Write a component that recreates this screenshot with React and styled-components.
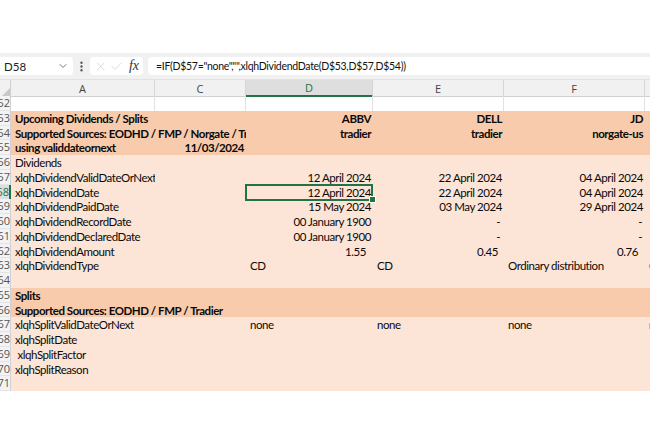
import React from "react";
import styled, { createGlobalStyle, css } from "styled-components";
import { ChevronDown, EllipsisVertical, X, Check } from "lucide-react";

const GREEN = "#217346";
const COLS = "11px 144px 91px 127px 131px 141px 60px";

const rows = [
  { n: 52, tone: "white", cells: [{}, {}, {}, {}, {}, {}] },
  {
    n: 53,
    tone: "dark",
    cells: [
      { t: "Upcoming Dividends / Splits", b: true, span: 2 },
      { t: "ABBV", b: true, r: true },
      { t: "DELL", b: true, r: true },
      { t: "JD", b: true, r: true },
      {},
    ],
  },
  {
    n: 54,
    tone: "dark",
    cells: [
      { t: "Supported Sources: EODHD / FMP / Norgate / Tradier", b: true, span: 2 },
      { t: "tradier", b: true, r: true },
      { t: "tradier", b: true, r: true },
      { t: "norgate-us", b: true, r: true },
      {},
    ],
  },
  {
    n: 55,
    tone: "dark",
    cells: [
      { t: "using validdateornext", b: true },
      { t: "11/03/2024", b: true, r: true },
      {},
      {},
      {},
      {},
    ],
  },
  { n: 56, tone: "light", cells: [{ t: "Dividends", span: 6 }] },
  {
    n: 57,
    tone: "light",
    cells: [
      { t: "xlqhDividendValidDateOrNext" },
      {},
      { t: "12 April 2024", r: true },
      { t: "22 April 2024", r: true },
      { t: "04 April 2024", r: true },
      {},
    ],
  },
  {
    n: 58,
    tone: "light",
    cells: [
      { t: "xlqhDividendDate" },
      {},
      { t: "12 April 2024", r: true, sel: true },
      { t: "22 April 2024", r: true },
      { t: "04 April 2024", r: true },
      {},
    ],
  },
  {
    n: 59,
    tone: "light",
    cells: [
      { t: "xlqhDividendPaidDate" },
      {},
      { t: "15 May 2024", r: true },
      { t: "03 May 2024", r: true },
      { t: "29 April 2024", r: true },
      {},
    ],
  },
  {
    n: 60,
    tone: "light",
    cells: [
      { t: "xlqhDividendRecordDate" },
      {},
      { t: "00 January 1900", r: true },
      { t: "-", r: true, pad: 4 },
      { t: "-", r: true, pad: 3 },
      {},
    ],
  },
  {
    n: 61,
    tone: "light",
    cells: [
      { t: "xlqhDividendDeclaredDate" },
      {},
      { t: "00 January 1900", r: true },
      { t: "-", r: true, pad: 4 },
      { t: "-", r: true, pad: 3 },
      {},
    ],
  },
  {
    n: 62,
    tone: "light",
    cells: [
      { t: "xlqhDividendAmount" },
      {},
      { t: "1.55", r: true, pad: 7 },
      { t: "0.45", r: true, pad: 6 },
      { t: "0.76", r: true, pad: 7 },
      {},
    ],
  },
  {
    n: 63,
    tone: "light",
    cells: [
      { t: "xlqhDividendType" },
      {},
      { t: "CD" },
      { t: "CD" },
      { t: "Ordinary distribution" },
      { t: "CD" },
    ],
  },
  { n: 64, tone: "light", cells: [{ span: 6 }] },
  { n: 65, tone: "dark", cells: [{ t: "Splits", b: true, span: 6 }] },
  {
    n: 66,
    tone: "dark",
    cells: [{ t: "Supported Sources: EODHD / FMP / Tradier", b: true, span: 6 }],
  },
  {
    n: 67,
    tone: "light",
    cells: [
      { t: "xlqhSplitValidDateOrNext" },
      {},
      { t: "none" },
      { t: "none" },
      { t: "none" },
      { t: "none" },
    ],
  },
  { n: 68, tone: "light", cells: [{ t: "xlqhSplitDate", span: 6 }] },
  { n: 69, tone: "light", cells: [{ t: "\u00a0xlqhSplitFactor", span: 6 }] },
  { n: 70, tone: "light", cells: [{ t: "xlqhSplitReason", span: 6 }] },
  { n: 71, tone: "light", cells: [{ span: 6 }] },
];

const headers = ["A", "C", "D", "E", "F", ""];

const App = () => (
  <>
    <GlobalStyle />
    <Page>
      <TopSpace />
      <FormulaBar>
        <NameBox>
          <span>D58</span>
          <ChevronDown size={12} strokeWidth={1.6} color="#555" />
        </NameBox>
        <Kebab>
          <EllipsisVertical size={13} strokeWidth={2.4} color="#555" />
        </Kebab>
        <FxBox>
          <X size={15} strokeWidth={1.1} color="#c4c4c4" />
          <Check size={15} strokeWidth={1.1} color="#c4c4c4" />
          <Fx>fx</Fx>
        </FxBox>
        <FormulaInput>
          =IF(D$57="none","",xlqhDividendDate(D$53,D$57,D$54))
        </FormulaInput>
      </FormulaBar>
      <HeaderRow>
        <Corner>
          <svg width="9" height="9" viewBox="0 0 9 9">
            <polygon points="9,1 9,9 1,9" fill="#c8c8c8" />
          </svg>
        </Corner>
        {headers.map((h, i) => (
          <ColHeader key={i} $active={h === "D"}>
            {h}
          </ColHeader>
        ))}
      </HeaderRow>
      {rows.map((row) => (
        <Row key={row.n} $tone={row.tone}>
          <RowNum $active={row.n === 58}>{row.n}</RowNum>
          {row.cells.map((c, i) => (
            <Cell
              key={i}
              $span={c.span || 1}
              $right={c.r}
              $bold={c.b}
              $pad={c.pad}
              $grid={row.tone === "white"}
              $selected={c.sel}
            >
              {c.t}
            </Cell>
          ))}
        </Row>
      ))}
    </Page>
  </>
);

const GlobalStyle = createGlobalStyle`
  body {
    margin: 0;
    background: #fff;
    font-family: "Lato", "Noto Sans", sans-serif;
  }
`;

const Page = styled.div`
  width: 650px;
  height: 445px;
  overflow: hidden;
  background: #fff;
`;

const TopSpace = styled.div`
  height: 53px;
`;

const FormulaBar = styled.div`
  display: flex;
  align-items: center;
  height: 26px;
  background: #f1f1f1;
  border-bottom: 1px solid #e2e2e2;
  font-family: "Lato", "Noto Sans", sans-serif;
  font-size: 11.5px;
  color: #222;
`;

const NameBox = styled.div`
  display: flex;
  align-items: center;
  justify-content: space-between;
  width: 73px;
  height: 18px;
  box-sizing: border-box;
  padding: 0 4px 0 4px;
  background: #fff;
  border-radius: 0 4px 4px 0;
`;

const Kebab = styled.div`
  display: flex;
  width: 17px;
  justify-content: center;
`;

const FxBox = styled.div`
  display: flex;
  align-items: center;
  gap: 3px;
  width: 53px;
  height: 18px;
  box-sizing: border-box;
  padding: 0 4px;
  background: #fff;
  border-radius: 4px;
`;

const Fx = styled.span`
  font-family: "Liberation Serif", "DejaVu Serif", serif;
  font-style: italic;
  font-size: 14px;
  color: #333;
  margin-left: 2px;
`;

const FormulaInput = styled.div`
  flex: 1;
  display: flex;
  align-items: center;
  height: 18px;
  margin-left: 5px;
  padding-left: 8px;
  background: #fff;
  border-radius: 4px 0 0 4px;
  font-size: 10.5px;
  letter-spacing: -0.3px;
  color: #111;
  white-space: nowrap;
  overflow: hidden;
`;

const HeaderRow = styled.div`
  display: grid;
  grid-template-columns: ${COLS};
  height: 16px;
  background: #f1f1f1;
  font-family: "Open Sans", "Noto Sans", sans-serif;
  font-size: 11px;
  color: #444;
`;

const Corner = styled.div`
  display: flex;
  align-items: flex-end;
  justify-content: flex-end;
  border-right: 1px solid #d0d0d0;
  border-bottom: 1px solid #d0d0d0;
`;

const ColHeader = styled.div`
  display: flex;
  align-items: center;
  justify-content: center;
  border-right: 1px solid #d6d6d6;
  border-bottom: 1px solid #d0d0d0;
  ${(p) =>
    p.$active &&
    css`
      background: #dedede;
      color: ${GREEN};
      border-bottom: 2px solid ${GREEN};
    `}
`;

const tones = {
  white: "#ffffff",
  dark: "#f8cbad",
  light: "#fce4d6",
};

const Row = styled.div`
  display: grid;
  grid-template-columns: ${COLS};
  height: 14.75px;
  background: ${(p) => tones[p.$tone]};
  font-size: 11.5px;
  letter-spacing: -0.45px;
  line-height: 15.5px;
  color: #0a0a0a;
`;

const RowNum = styled.div`
  background: #f3f3f3;
  border-right: 1px solid #d0d0d0;
  border-bottom: 1px solid #e4e4e4;
  font-family: "Open Sans", "Noto Sans", sans-serif;
  font-size: 11px;
  letter-spacing: 0;
  line-height: 14.75px;
  color: ${(p) => (p.$active ? GREEN : "#555")};
  text-align: right;
  white-space: nowrap;
  overflow: hidden;
  direction: rtl;
  ${(p) =>
    p.$active &&
    css`
      background: #dedede;
      border-right: 2px solid ${GREEN};
    `}
`;

const Cell = styled.div`
  position: relative;
  grid-column: span ${(p) => p.$span};
  padding: ${(p) => (p.$right ? `0 ${p.$pad ?? 2}px 0 0` : "0 0 0 4px")};
  text-align: ${(p) => (p.$right ? "right" : "left")};
  font-weight: ${(p) => (p.$bold ? 700 : 400)};
  white-space: nowrap;
  overflow: hidden;
  border-right: ${(p) => (p.$grid ? "1px solid #e1e1e1" : "none")};
  ${(p) =>
    p.$selected &&
    css`
      overflow: visible;
      &::after {
        content: "";
        position: absolute;
        inset: -1px 0 -1px -1px;
        border: 2px solid ${GREEN};
        pointer-events: none;
      }
      &::before {
        content: "";
        position: absolute;
        right: -3px;
        bottom: -3px;
        width: 5px;
        height: 5px;
        background: ${GREEN};
        border: 1px solid #fff;
        z-index: 1;
      }
    `}
`;

export default App;
